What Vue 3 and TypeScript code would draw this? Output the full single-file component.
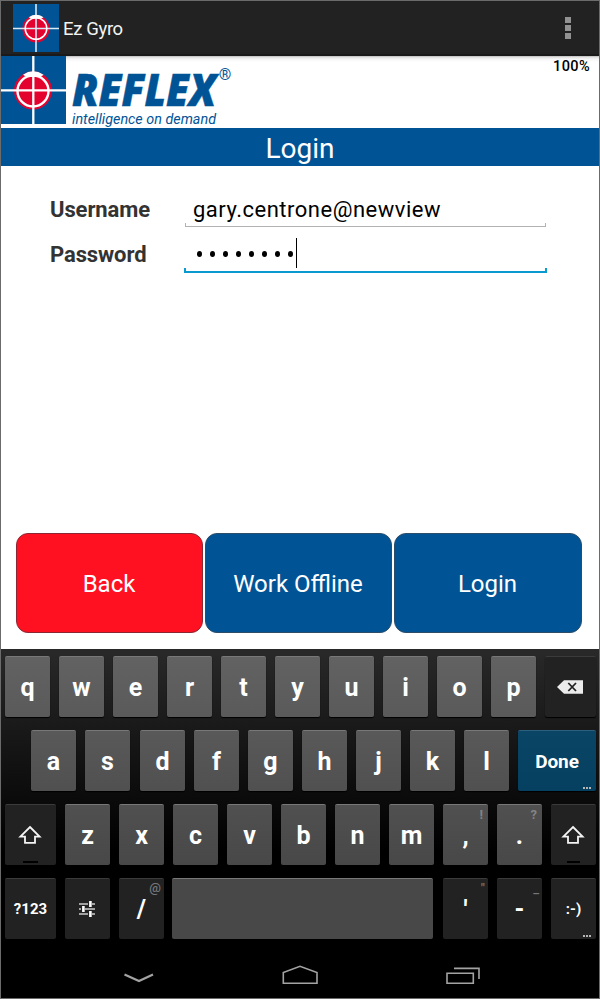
<script setup lang="ts">
interface Key {
  label?: string
  hint?: string
  icon?: 'backspace' | 'shift' | 'settings'
  kind?: string
  more?: boolean
}

const letters = (chars: string): Key[] => chars.split('').map((label) => ({ label }))

const rows: Key[][] = [
  [...letters('qwertyuiop'), { icon: 'backspace', kind: 'dark wide' }],
  [
    ...letters('as'),
    { label: 'd', kind: 'nudge' },
    ...letters('fghjkl'),
    { label: 'Done', kind: 'done', more: true },
  ],
  [
    { icon: 'shift', kind: 'dark wide' },
    ...letters('zxcvbnm'),
    { label: ',', hint: '!' },
    { label: '.', hint: '?' },
    { icon: 'shift', kind: 'dark narrow-shift' },
  ],
  [
    { label: '?123', kind: 'dark wide small' },
    { icon: 'settings', kind: 'dark' },
    { label: '/', hint: '@', kind: 'dark slash' },
    { kind: 'space' },
    { label: "'", hint: '"', kind: 'dark' },
    { label: '-', hint: '_', kind: 'dark' },
    { label: ':-)', kind: 'dark small smile', more: true },
  ],
]

const buttons = [
  { label: 'Back', kind: 'back' },
  { label: 'Work Offline', kind: 'offline' },
  { label: 'Login', kind: 'login' },
]
</script>

<template>
  <div class="screen">
    <header class="action-bar">
      <svg class="app-icon" viewBox="0 0 46 48">
        <rect width="46" height="48" fill="#005496" />
        <circle cx="23" cy="24.8" r="13.6" fill="#e4032e" />
        <path d="M0 24.5H46M23 0V48" stroke="#dbe9f5" stroke-width="1.6" />
        <circle cx="23" cy="24.5" r="10.8" fill="none" stroke="#fff" stroke-width="1.5" />
        <path d="M15.8 13.2Q23 8.5 30.5 13.2L28.5 14.6H17.8Z" fill="#fff" />
      </svg>
      <span class="app-name">Ez Gyro</span>
      <div class="overflow"><i></i><i></i><i></i></div>
    </header>

    <section class="brand">
      <svg class="logo" viewBox="0 0 240 72">
        <rect width="65" height="68" fill="#005496" />
        <circle cx="32" cy="34.6" r="19" fill="#e4032e" />
        <path d="M0 34.3H65M32.3 0V68" stroke="#fff" stroke-width="2.3" />
        <circle cx="32" cy="35" r="15.5" fill="none" stroke="#fff" stroke-width="2.4" />
        <path d="M22 18.7Q32 12 42.6 18.7L39.5 21H25.5Z" fill="#fff" />
        <text class="wordmark" x="71" y="49.7" textLength="144" lengthAdjust="spacingAndGlyphs">REFLEX</text>
        <text class="registered" x="217.8" y="24">®</text>
        <text class="tagline" x="71" y="68" textLength="144" lengthAdjust="spacingAndGlyphs">intelligence on demand</text>
      </svg>
      <span class="battery">100%</span>
    </section>

    <h1 class="title">Login</h1>

    <main class="content">
      <div class="field">
        <label>Username</label>
        <div class="input"><span class="value">gary.centrone@newview</span></div>
      </div>
      <div class="field password">
        <label>Password</label>
        <div class="input focused">
          <span class="dots"><i v-for="n in 8" :key="n"></i></span>
          <span class="caret"></span>
        </div>
      </div>
      <div class="actions">
        <button v-for="b in buttons" :key="b.kind" :class="b.kind"><span>{{ b.label }}</span></button>
      </div>
    </main>

    <section class="keyboard">
      <div v-for="(row, r) in rows" :key="r" class="row" :class="'row-' + (r + 1)">
        <div v-for="(key, k) in row" :key="k" class="key" :class="key.kind">
          <span v-if="key.label" class="glyph">{{ key.label }}</span>
          <span v-if="key.hint" class="hint" :class="{ low: key.hint === '_' }">{{ key.hint }}</span>
          <svg v-if="key.icon === 'backspace'" class="backspace" viewBox="0 0 28 14">
            <path d="M1 7L8 .3H27V13.7H8Z" fill="#ececec" />
            <path d="M12.3 3L20 11M20 3L12.3 11" stroke="#222" stroke-width="1.8" />
          </svg>
          <template v-else-if="key.icon === 'shift'">
            <svg class="shift" viewBox="0 0 24 20">
              <path d="M12 2L21.6 11.6H17V17.9H7V11.6H2.4Z" fill="none" stroke="#f4f4f4" stroke-width="1.8" />
            </svg>
            <i class="lock"></i>
          </template>
          <svg v-else-if="key.icon === 'settings'" class="settings" viewBox="0 0 16 16">
            <path d="M0 3H9M13 3H16M0 8H2M6 8H16M0 13H9M13 13H16" stroke="#ccc" stroke-width="1.4" />
            <path d="M11.4 0V6M4.4 5V11M11.4 10V16" stroke="#fff" stroke-width="2.6" />
          </svg>
          <span v-if="key.more" class="more"><i></i><i></i><i></i></span>
        </div>
      </div>
    </section>

    <nav class="nav-bar">
      <svg viewBox="0 0 598 58">
        <g fill="none" stroke="#a3a3a3" stroke-width="1.6">
          <path d="M123.5 34.5L138 41L152 34.5" stroke-width="2.2" />
          <path d="M282.3 43.2V32.6L299 26.3L316 32.6V43.2Z" />
          <path d="M446 33.3H472.3V43.3H446Z" />
          <path d="M453 28.4H478V39" />
        </g>
      </svg>
    </nav>
  </div>
</template>

<style>
body {
  margin: 0;
}
</style>

<style scoped>
* {
  box-sizing: border-box;
}
.screen {
  width: 600px;
  height: 999px;
  border: 1px solid #6b6b6b;
  background: #fff;
  display: flex;
  flex-direction: column;
  font-family: Roboto, "Liberation Sans", sans-serif;
  overflow: hidden;
}
.action-bar {
  height: 55px;
  flex: none;
  background: #222;
  border-bottom: 2px solid #1a1a1a;
  display: flex;
  align-items: center;
  padding: 1px 28px 0 12px;
}
.app-icon {
  width: 46px;
  height: 48px;
}
.app-name {
  margin-left: 4px;
  color: #f3f3f3;
  font-size: 18.5px;
  line-height: 24px;
  letter-spacing: -0.35px;
  padding-top: 1px;
}
.overflow {
  margin-left: auto;
  display: grid;
  gap: 2px;
}
.overflow i {
  width: 6px;
  height: 6px;
  background: #929292;
}
.brand {
  height: 72px;
  flex: none;
  display: flex;
  justify-content: space-between;
  background: linear-gradient(#b5b5b5 0, #dedede 1px, #f5f5f5 3px, #fff 6px);
}
.logo {
  width: 240px;
  height: 72px;
}
.logo text {
  fill: #005496;
}
.wordmark {
  font: italic 800 44px "Open Sans", Roboto, sans-serif;
  stroke: #005496;
  stroke-width: 0.5px;
}
.registered {
  font: 16px Roboto, sans-serif;
}
.tagline {
  font: italic 15.5px Roboto, sans-serif;
}
.battery {
  font-size: 14.5px;
  font-weight: 500;
  line-height: 20px;
  letter-spacing: 0.4px;
  margin-right: 9px;
  padding-top: 1px;
}
.title {
  margin: 0;
  height: 38px;
  flex: none;
  background: #005496;
  color: #fff;
  font-size: 28px;
  line-height: 42px;
  font-weight: 400;
  text-align: center;
}
.content {
  height: 483px;
  flex: none;
  display: flex;
  flex-direction: column;
  padding: 25px 17px 16px 15px;
}
.field {
  display: flex;
  align-items: flex-end;
  height: 36px;
  padding-left: 34px;
}
.field.password {
  height: 46px;
}
label {
  width: 135px;
  color: #333;
  font-size: 22px;
  font-weight: 700;
  line-height: 26px;
  letter-spacing: -0.1px;
  padding-bottom: 4px;
}
.password label {
  padding-bottom: 5px;
}
.input {
  position: relative;
  width: 361px;
  height: 36px;
  padding-left: 8px;
  border-bottom: 1px solid #b2b2b2;
  font-size: 22px;
  line-height: 38px;
  letter-spacing: 0.5px;
}
.input::before,
.input::after {
  content: "";
  position: absolute;
  bottom: 0;
  width: 1px;
  height: 3px;
  background: #b2b2b2;
}
.input::before {
  left: 0;
}
.input::after {
  right: 0;
}
.input.focused {
  width: 363px;
  height: 36px;
  margin-left: -1px;
  padding-left: 13px;
  border-bottom: 2px solid #0a9bce;
  display: flex;
}
.input.focused::before,
.input.focused::after {
  width: 2px;
  background: #0a9bce;
}
.dots {
  display: flex;
  gap: 8px;
  align-items: center;
  height: 34px;
}
.dots i {
  width: 5px;
  height: 6px;
  border-radius: 50%;
  background: #000;
}
.caret {
  width: 1px;
  height: 30px;
  margin: 1px 0 0 3px;
  background: #000;
}
.actions {
  margin-top: auto;
  display: grid;
  grid-template-columns: 187px 187px 188px;
  gap: 2px;
  height: 100px;
}
button {
  border: 1.5px solid #2c4c68;
  border-radius: 12px;
  background: #005496;
  color: #fff;
  font: 24px Roboto, sans-serif;
  padding: 2px 1px 0 0;
}
button.back {
  background: #ff1122;
  border-color: #8b2733;
}
.keyboard {
  flex: none;
  height: 291px;
  padding: 7px 3px 0 4px;
  background: linear-gradient(#292929, #000 70%);
  display: flex;
  flex-direction: column;
  gap: 13px;
}
.row {
  display: flex;
  gap: 9px;
  height: 61px;
}
.row-2 {
  padding-left: 26px;
}
.key {
  position: relative;
  flex: none;
  width: 45px;
  height: 61px;
  border-radius: 2px;
  border-top: 1px solid #787878;
  box-shadow: 0 1px 1px #000;
  color: #fff;
  font-size: 25px;
  font-weight: 700;
  line-height: 30px;
  display: flex;
  align-items: center;
  justify-content: center;
  padding-top: 2px;
}
.row-1 .key {
  background: linear-gradient(#626262, #5a5a5a);
}
.row-2 .key {
  background: linear-gradient(#595959, #505050);
}
.row-3 .key {
  background: linear-gradient(#505050, #484848);
}
.row-4 .key {
  background: #484848;
}
.row .key.dark {
  background: #222;
  border-top-color: #3b3b3b;
}
.key.wide {
  width: 51px;
}
.key.nudge {
  margin-left: 1px;
}
.row .key.done {
  width: 78px;
  background: linear-gradient(#0a4565, #064060);
  border-top-color: #2d607c;
  font-size: 19px;
  letter-spacing: -0.1px;
}
.key.space {
  width: 261px;
  margin: 0 1px 0 -1px;
}
.key.small {
  font-size: 15px;
  padding-top: 0;
}
.hint {
  position: absolute;
  top: 2px;
  right: 3px;
  font-size: 13px;
  line-height: 15px;
  font-weight: 500;
  color: #848484;
}
.row-3 .hint {
  right: 5px;
  font-weight: 700;
}
.row-4 .hint {
  color: #777;
}
.slash .hint {
  top: 1px;
}
.more {
  position: absolute;
  right: 5px;
  bottom: 2px;
  display: flex;
  gap: 1px;
}
.more i {
  width: 2px;
  height: 2px;
  background: #b5b5b5;
}
.key > svg {
  margin: 0 1px 3px 0;
}
.backspace {
  width: 28px;
  height: 14px;
}
.shift {
  width: 24px;
  height: 20px;
}
.lock {
  position: absolute;
  bottom: 2px;
  left: 18px;
  width: 15px;
  height: 2px;
  background: #000;
}
.narrow-shift .lock {
  left: 16px;
  width: 13px;
}
.settings {
  width: 16px;
  height: 16px;
}
.nav-bar {
  height: 58px;
  background: #000;
}
.nav-bar svg {
  display: block;
  width: 598px;
  height: 58px;
}
</style>
